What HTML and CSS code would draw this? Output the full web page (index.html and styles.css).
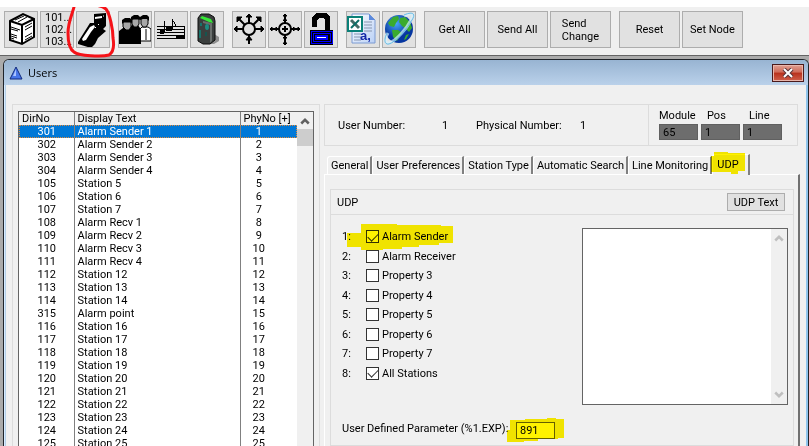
FILE: index.html
```
<!DOCTYPE html>
<html lang="en">
<head>
<meta charset="utf-8">
<title>Users</title>
<link rel="stylesheet" href="styles.css">
</head>
<body>
<header class="toolbar">
  <div class="group">
    <button class="tool" aria-label="Exchange"><svg viewBox="0 0 32 35" fill="none" stroke="#000" stroke-width="2"><path fill="#fff" d="M5 9 18 2l11 5v18L17 32 5 28Z"/><path d="M5 9l12 4 12-6M17 13v19"/><path stroke-width="1" d="M6 15l9 3M6 17l7 2M6 22l6 2M6 24l6 2M6 26l3 1M20 15l7-4M20 18l7-4M20 25l7-4M20 28l7-4M10 8l9-4M13 10l9-5"/></svg></button>
    <button class="tool numbers">101...<br>102...<br>103...</button>
    <button class="tool marked" aria-label="Users"><svg viewBox="0 0 32 35"><path d="M17 2l12-1v13l-3 3 3 2-8 7-3 6-4 4-13-4v-2L13 11h4Z"/><path fill="#fff" d="M18 5l7-1v2l-7 1ZM5 27l8-12 4-2 1 2-4 5-5 8-3 1Z"/><path stroke="#fff" d="M26 4h1M21 13l1-1M18 16l1-1"/></svg>
      <svg class="ring" viewBox="0 0 52 58" fill="none" stroke="#f51218" stroke-width="3" stroke-linecap="round"><path d="M8 5C6 13 2 20 2 31c0 8 1 16 6 19 5 4 28 5 35 3 5-3 5-11 4-17 0-8-3-24-7-29C35 3 22 1 12 3"/></svg></button>
  </div>
  <div class="group">
    <button class="tool" aria-label="Groups"><svg viewBox="0 0 32 35"><path fill="#fff" stroke="#000" d="M20 29V18l3-3h6l3 2v12Z"/><path stroke="#000" d="M27 17v11"/><path d="M0 32V19l4-3h3l2 1 4-4h6l2 3 1 2v14Z"/><path fill="#a8a8a8" stroke="#000" d="M4 10h8v5l-2 3H7l-3-3Z"/><path d="M3 12V8l3-2h5l2 2v3l-2-1H5Z"/><path fill="#a8a8a8" stroke="#000" d="M13 7h7v5l-2 3h-3l-2-3Z"/><path d="M12 8V5l3-2h4l2 2v3l-2-1h-4Z"/><path fill="#a8a8a8" stroke="#000" d="M22 6h7v6l-2 3h-3l-2-3Z"/><path d="M21 8V5l3-2h4l2 2v4l-2-2h-4Z"/></svg></button>
    <button class="tool" aria-label="Melodies"><svg viewBox="0 0 32 35" fill="none" stroke="#000" shape-rendering="crispEdges"><path d="M2 14h28M2 17h28M2 20h28M2 23h28M2 26h28" stroke-width="1"/><path d="M9 20V9M17 17V7l3 5v3M29 26V14"/><g fill="#000"><ellipse cx="7" cy="20" rx="2" ry="2"/><ellipse cx="14" cy="17" rx="3" ry="2"/><ellipse cx="25" cy="25" rx="4" ry="2"/></g></svg></button>
    <button class="tool" aria-label="Pager"><svg viewBox="0 0 32 35"><path fill="#8f8f8f" d="M12 32h11l5-3v-4l-5-3Z"/><path fill="#3b3f3e" stroke="#0c0c0c" d="M7 6l3-4h8l5 3 1 4v19l-5 4h-7l-5-3Z"/><path fill="#6a6f6d" d="M12 9l9 2v18l-2 2V13l-7-2Z"/><path fill="#35e835" d="M9 6l2-2 9 3 2 4-4-1Z"/><path stroke="#17746c" stroke-width="2" d="M10 11v3M9 18v8"/><ellipse cx="16" cy="15" rx="2" ry="3" fill="#1c8c80"/><path fill="#17544e" d="M14 20h2v4h-2Z"/></svg></button>
  </div>
  <div class="group">
    <button class="tool" aria-label="Distribute"><svg viewBox="0 0 32 35" fill="none" stroke="#000" stroke-width="2"><circle cx="16" cy="17" r="6"/><path d="M16 11V3M16 23v9M10 17H2M22 17h8M12 13 6 7M20 13l6-6"/><path stroke-width="1" fill="#000" d="M13 5l3-3 3 3ZM13 28l3-4 3 4ZM4 14l-3 3 3 3ZM28 14l3 3-3 3ZM4 10V5h5ZM28 10V5h-5Z"/></svg></button>
    <button class="tool" aria-label="Target"><svg viewBox="0 0 32 35" fill="none" stroke="#000" stroke-width="2"><circle cx="16" cy="17" r="6"/><path d="M16 11V3M16 23v9M10 17H2M22 17h8M13 17h6M16 14v6"/><path stroke-width="1" fill="#000" d="M14 4l2-2 2 2ZM14 31l2 2 2-2ZM3 15l-2 2 2 2ZM29 15l2 2-2 2ZM14 8h4l-2 2ZM14 26h4l-2-2ZM7 15v4l2-2ZM25 15v4l-2-2Z"/></svg></button>
    <button class="tool" aria-label="Unlock"><svg viewBox="0 0 32 35" shape-rendering="crispEdges"><path d="M7 15V5l4-4h10l4 4v13h-5V8l-2-2h-4l-2 2v7ZM5 18h23v15H5Z"/><path fill="none" stroke="#00f" d="M6 19h21v12H6ZM8 21h17v8H8Z"/><path fill="#00f" d="M10 23h13v5H10Z"/><path fill="#fff" d="M12 25h9v1h-9Z"/></svg></button>
  </div>
  <div class="group">
    <button class="tool" aria-label="Export CSV"><svg viewBox="0 0 32 35"><defs><linearGradient id="sheet" x2="1" y2="1"><stop stop-color="#fff"/><stop offset="1" stop-color="#b9d0f6"/></linearGradient></defs><path fill="url(#sheet)" stroke="#7c9bd2" d="M5 2h17l6 6v23H5Z"/><path fill="#5b8ade" d="M22 2v6h6Z"/><path stroke="#8796b0" d="M17 10h8M17 13h8M17 16h8M17 19h8M7 22h7M7 25h7M7 28h7"/><path fill="#fff" stroke="#0a8078" stroke-width="2" d="M1 5h14v14H1Z"/><path fill="none" stroke="#456b66" stroke-width="3" d="M4 8l8 8"/><path stroke="#0a6e66" stroke-width="2" d="M12 8l-8 8"/><text class="glyph" x="13" y="28">a,</text></svg></button>
    <button class="tool" aria-label="Web"><svg viewBox="0 0 32 35"><defs><radialGradient id="sea" cx=".4" cy=".3"><stop stop-color="#4aa8f8"/><stop offset="1" stop-color="#0636a0"/></radialGradient></defs><circle cx="16" cy="17" r="14" fill="url(#sea)"/><path fill="#3aab2e" d="M5 11l5-6 5-1 1 3-3 4-2 4-4-1ZM17 6l5-1 5 5 2 6-3 4-4-4-3-2-3-4ZM9 18l6 0 4 3-3 4-2 4-4-4ZM23 23l3-1-3 5-2 1Z"/><path fill="none" stroke="#d5f2ff" stroke-width="3" d="M21 4c8-4 11-2 7 4C24 16 13 29 6 31c-4 1-4-5-1-10" opacity=".7"/><path fill="none" stroke="#62b9e4" stroke-width="1" d="M21 3c9-4 12-1 8 5C24 17 13 30 6 32c-5 1-5-5-2-11"/></svg></button>
  </div>
  <div class="group">
    <button class="command">Get All</button>
    <button class="command">Send All</button>
    <button class="command"><span>Send<br>Change</span></button>
  </div>
  <div class="group">
    <button class="command">Reset</button>
    <button class="command">Set Node</button>
  </div>
</header>
<main class="desktop">
<section class="window">
  <div class="titlebar">
    <svg class="logo" viewBox="0 0 14 14"><path fill="#4775e8" stroke="#122b7c" d="M7 1l6 12H1Z"/><path fill="#a9c3ff" d="M7 3v7H4Z"/></svg>
    <h1>Users</h1>
    <button class="close" aria-label="Close"><svg viewBox="0 0 12 10"><path stroke="#59343a" stroke-width="4" d="M2 1l8 8M10 1l-8 8"/><path stroke="#fff" stroke-width="2" d="M2 1l8 8M10 1l-8 8"/></svg></button>
  </div>
  <div class="content">
    <div class="left">
      <div class="list">
        <table>
          <thead><tr><th>DirNo</th><th>Display Text</th><th>PhyNo [+]</th></tr></thead>
          <tbody>
            <tr class="selected"><td>301</td><td>Alarm Sender 1</td><td>1</td></tr>
            <tr><td>302</td><td>Alarm Sender 2</td><td>2</td></tr>
            <tr><td>303</td><td>Alarm Sender 3</td><td>3</td></tr>
            <tr><td>304</td><td>Alarm Sender 4</td><td>4</td></tr>
            <tr><td>105</td><td>Station 5</td><td>5</td></tr>
            <tr><td>106</td><td>Station 6</td><td>6</td></tr>
            <tr><td>107</td><td>Station 7</td><td>7</td></tr>
            <tr><td>108</td><td>Alarm Recv 1</td><td>8</td></tr>
            <tr><td>109</td><td>Alarm Recv 2</td><td>9</td></tr>
            <tr><td>110</td><td>Alarm Recv 3</td><td>10</td></tr>
            <tr><td>111</td><td>Alarm Recv 4</td><td>11</td></tr>
            <tr><td>112</td><td>Station 12</td><td>12</td></tr>
            <tr><td>113</td><td>Station 13</td><td>13</td></tr>
            <tr><td>114</td><td>Station 14</td><td>14</td></tr>
            <tr><td>315</td><td>Alarm point</td><td>15</td></tr>
            <tr><td>116</td><td>Station 16</td><td>16</td></tr>
            <tr><td>117</td><td>Station 17</td><td>17</td></tr>
            <tr><td>118</td><td>Station 18</td><td>18</td></tr>
            <tr><td>119</td><td>Station 19</td><td>19</td></tr>
            <tr><td>120</td><td>Station 20</td><td>20</td></tr>
            <tr><td>121</td><td>Station 21</td><td>21</td></tr>
            <tr><td>122</td><td>Station 22</td><td>22</td></tr>
            <tr><td>123</td><td>Station 23</td><td>23</td></tr>
            <tr><td>124</td><td>Station 24</td><td>24</td></tr>
            <tr><td>125</td><td>Station 25</td><td>25</td></tr>
          </tbody>
        </table>
        <div class="scroll"><svg viewBox="0 0 8 6"><path d="M1 5l3-3 3 3"/></svg><div class="thumb"></div></div>
      </div>
    </div>
    <div class="right">
      <div class="summary">
        <dl class="ids">
          <dt>User Number:</dt><dd>1</dd>
          <dt>Physical Number:</dt><dd>1</dd>
        </dl>
        <div class="position">
          <label>Module<input value="65" readonly></label>
          <label>Pos<input value="1" readonly></label>
          <label>Line<input value="1" readonly></label>
        </div>
      </div>
      <div class="tabs" role="tablist">
        <button class="tab" role="tab">General</button>
        <button class="tab" role="tab">User Preferences</button>
        <button class="tab" role="tab">Station Type</button>
        <button class="tab" role="tab">Automatic Search</button>
        <button class="tab" role="tab">Line Monitoring</button>
        <button class="tab active" role="tab" aria-selected="true">UDP<svg class="mark mark-tab" viewBox="0 0 36 24"><path d="M4 0h14v1h17v18h-7v3h-7v-2H1V4h3Z"/></svg></button>
      </div>
      <div class="panel">
        <div class="heading"><h2>UDP</h2><button class="small">UDP Text</button></div>
        <div class="fields">
          <ol class="options">
            <li><span>1:</span><label><input type="checkbox" checked>Alarm Sender</label><svg class="mark mark-row" viewBox="0 0 106 28"><path d="M14 1h36v1h44v1h12v17H92v2H72v2H55v2H36v1H14v-3H0V10h14Z"/></svg></li>
            <li><span>2:</span><label><input type="checkbox">Alarm Receiver</label></li>
            <li><span>3:</span><label><input type="checkbox">Property 3</label></li>
            <li><span>4:</span><label><input type="checkbox">Property 4</label></li>
            <li><span>5:</span><label><input type="checkbox">Property 5</label></li>
            <li><span>6:</span><label><input type="checkbox">Property 6</label></li>
            <li><span>7:</span><label><input type="checkbox">Property 7</label></li>
            <li><span>8:</span><label><input type="checkbox" checked>All Stations</label></li>
          </ol>
          <div class="memo">
            <textarea aria-label="UDP text"></textarea>
            <div class="scroll disabled"><svg viewBox="0 0 8 6"><path d="M1 5l3-3 3 3"/></svg><svg viewBox="0 0 8 6"><path d="M1 1l3 3 3-3"/></svg></div>
          </div>
          <div class="parameter">
            <label for="parameter">User Defined Parameter (%1.EXP):</label>
            <span class="value"><input id="parameter" value="891"><svg class="mark mark-value" viewBox="0 0 57 25"><path d="M3 2h15V1h22V0h9v1h8v19h-6v1H31v2H17v1H0V12h3Z"/></svg></span>
          </div>
        </div>
      </div>
    </div>
  </div>
</section>
</main>
</body>
</html>
```
FILE: styles.css
```
* { box-sizing: border-box; }
body {
  margin: 0;
  height: 100vh;
  overflow: hidden;
  display: flex;
  flex-direction: column;
  background: #f0f0f0;
  border-top: 7px solid #fff;
  font: 11px/13px Roboto, "Liberation Sans", sans-serif;
  color: #000;
}
button, input, textarea { font: inherit; color: inherit; margin: 0; border-radius: 0; }
h1, h2, dl, dd, ol { margin: 0; padding: 0; font-weight: normal; }

.toolbar { display: flex; flex: none; gap: 8px; height: 48px; padding: 4px; }
.group { display: flex; gap: 2px; }
.tool, .command {
  position: relative;
  height: 37px;
  padding: 0;
  border: 1px solid #adadad;
  background: #e1e1e1;
}
.tool { width: 34px; }
.tool > svg:first-child { display: block; width: 32px; height: 35px; }
.numbers { padding-left: 4px; text-align: left; line-height: 12px; overflow: hidden; }
.command { width: 61px; }
.command span { display: inline-block; text-align: left; }
.tool .ring { position: absolute; left: -11px; top: -10px; width: 52px; height: 58px; z-index: 2; }
.glyph { font: bold 13px "Liberation Sans", sans-serif; fill: #1428a8; }

.desktop { flex: 1; min-height: 0; padding: 3px 0 0 3px; background: #ababab; border-top: 1px solid #646464; }
.window {
  height: 100%;
  display: flex;
  flex-direction: column;
  background: #f0f0f0;
  border: solid #20242a;
  border-width: 1px 1px 0;
  border-radius: 6px 6px 0 0;
  box-shadow: inset 1px 0 #d8ecff, inset 2px 0 #b4cfe8, inset -2px 0 #8fc4ec;
}
.titlebar {
  display: flex;
  flex: none;
  align-items: center;
  height: 25px;
  padding: 0 4px 0 5px;
  border-radius: 5px 5px 0 0;
  background: linear-gradient(#98b4d2, #bad1ea);
}
.logo { width: 14px; height: 14px; }
h1 { flex: 1; padding-left: 5px; font: 11px/16px "Open Sans", sans-serif; }
.close { width: 32px; height: 18px; padding: 0; border: 1px solid #4b1a1c; background: linear-gradient(#e0a093, #cf6a58 45%, #b8301c 50%, #d0604c); box-shadow: inset 0 0 0 1px #e9b6ac; }
.close svg { display: block; width: 12px; height: 10px; margin: auto; }

.content { flex: 1; min-height: 0; display: grid; grid-template-columns: 308px 1fr; gap: 4px; padding: 19px 8px 0; }
.left { min-height: 0; padding: 6px 5px 0; border: 1px solid #dcdcdc; border-bottom: 0; overflow: hidden; }
.list { display: flex; height: 100%; overflow: hidden; border: 1px solid #646464; border-bottom: 0; background: #fff; }
table { flex: 1; border-collapse: collapse; table-layout: fixed; align-self: flex-start; }
th, td { height: 13px; padding: 1px 0 0 3px; line-height: 12px; font-weight: normal; text-align: left; white-space: nowrap; }
th { background: #f0f0f0; }
th:first-child, td:first-child { width: 55px; }
th:last-child, td:last-child { width: 57px; }
th + th, td + td { border-left: 1px solid #808080; }
td:first-child { padding: 1px 0 0 1px; text-align: center; }
td:last-child { padding: 1px 20px 0 0; text-align: center; }
.selected { background: #0078d7; color: #fff; outline: 1px dotted #e48a38; outline-offset: -1px; }
.scroll { display: flex; flex: none; flex-direction: column; align-items: center; width: 16px; padding-top: 5px; background: #f0f0f0; }
.scroll svg { width: 10px; height: 8px; fill: none; stroke: #606060; stroke-width: 2; }
.thumb { width: 100%; height: 17px; margin-top: 4px; background: #cdcdcd; }

.right { display: flex; flex-direction: column; min-width: 0; min-height: 0; }
.summary { display: flex; flex: none; height: 42px; margin-right: 2px; border: 1px solid #dcdcdc; }
.ids { flex: 1; display: grid; grid-template-columns: 104px 34px 104px 1fr; align-items: center; padding-left: 13px; }
.position { display: flex; gap: 3px; width: 149px; padding: 4px 0 0 10px; border-left: 1px solid #dcdcdc; }
.position label + label { text-indent: 6px; }
.position input { display: block; width: 39px; height: 16px; padding: 0 3px; border: 1px solid #606060; background: #6d6d6d; margin-top: 2px; text-indent: 0; }
.tabs { display: flex; flex: none; align-items: flex-end; height: 28px; padding-left: 3px; }
.tab { position: relative; height: 18px; padding: 0 2px 0 3px; border: solid #fff; border-width: 1px 2px 0 1px; border-right-color: #808080; border-radius: 3px 0 0; background: #f0f0f0; white-space: nowrap; }
.tab.active { height: 21px; padding: 0 9px 2px 4px; margin-bottom: -1px; }
.panel { flex: 1; min-height: 0; padding: 14px 4px 0 5px; border: solid #fff; border-width: 1px 2px 0 1px; border-right-color: #707070; }
.heading { display: flex; align-items: center; justify-content: space-between; height: 26px; padding: 0 8px 0 6px; border: 1px solid #dcdcdc; }
h2 { font-size: 11px; line-height: 13px; }
.small { width: 58px; height: 18px; padding: 0; border: 1px solid #adadad; background: #e1e1e1; }
.fields { display: grid; grid-template-columns: 1fr 206px; row-gap: 11px; height: 231px; padding: 13px 5px 0 11px; border: 1px solid #dcdcdc; border-top: 0; }
.options { display: grid; grid-auto-rows: 1fr; height: 156px; margin-top: -1px; list-style: none; }
.options li { position: relative; display: flex; align-items: center; }
.options span { width: 24px; }
.options label { display: flex; align-items: center; gap: 3px; }
.options input { appearance: none; display: grid; place-items: center; width: 13px; height: 13px; border: 1px solid #333; background: #fff; }
.options input:checked::before { content: ""; width: 9px; height: 5px; border: solid #333; border-width: 0 0 1px 1px; transform: translateY(-1px) rotate(-45deg); }
.memo { display: flex; height: 177px; border: 1px solid #646464; background: #fff; }
textarea { flex: 1; min-width: 0; border: 0; resize: none; background: #fff; }
.memo .scroll { justify-content: space-between; padding-bottom: 5px; }
.disabled svg { stroke: #bfbfbf; }
.parameter { grid-column: 1 / -1; display: flex; align-items: flex-start; }
.parameter label { width: 174px; white-space: nowrap; }
.value { position: relative; }
.value input { display: block; width: 39px; height: 17px; padding: 0 3px; border: 1px solid #646464; background: #fff; }

.mark { position: absolute; fill: #fff200; mix-blend-mode: multiply; pointer-events: none; }
.mark-tab { left: -3px; top: -3px; width: 36px; height: 24px; }
.mark-row { left: 5px; top: -4px; width: 106px; height: 28px; }
.mark-value { left: -9px; top: -4px; width: 57px; height: 25px; }
```
